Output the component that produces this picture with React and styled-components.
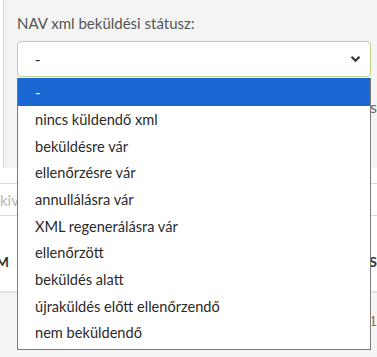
import React from 'react'
import styled, { createGlobalStyle } from 'styled-components'

const GlobalStyle = createGlobalStyle`
    html, body {
        margin: 0;
        padding: 0;
        background: #ffffff;
    }
    body {
        font-family: Lato, "Open Sans", sans-serif;
    }
`

const Page = styled.div`
    position: relative;
    width: 377px;
    height: 357px;
    overflow: hidden;
    background: #ffffff;
`

const FilterPanel = styled.div`
    height: 168px;
    box-sizing: border-box;
    margin-left: 3px;
    border-left: 1px solid #d6d6d6;
    background: #f4f4f4;
    padding: 13px 6px 0 13px;
`

const Label = styled.div`
    font-size: 15px;
    color: #555;
    line-height: 20px;
    margin-bottom: 8px;
`

const Select = styled.div`
    height: 36px;
    box-sizing: border-box;
    border: 1px solid #bed28c;
    border-radius: 4px;
    background: #ffffff;
    display: flex;
    align-items: center;
    justify-content: space-between;
    padding: 0 9px 0 17px;
    font-size: 15px;
    color: #222;
`

const HiddenRow = styled.div`
    display: flex;
    justify-content: flex-end;
    margin: 20px -6px 0 0;
    font-size: 16px;
    color: #666;
    white-space: nowrap;
`

const WhiteSection = styled.div`
    padding-top: 15px;
`

const SearchInput = styled.div`
    height: 33px;
    box-sizing: border-box;
    border-top: 1px solid #cfdbe6;
    border-bottom: 1px solid #cfdbe6;
    display: flex;
    align-items: center;
    font-size: 15px;
    color: #b5b5b5;
`

const HeaderRow = styled.div`
    height: 77px;
    display: flex;
    align-items: center;
    justify-content: space-between;
    padding-top: 15px;
    box-sizing: border-box;
    font-size: 14px;
    font-weight: 700;
    color: #333;
    border-bottom: 2px solid #e2e2e2;
`

const DataRow = styled.div`
    height: 64px;
    background: #f5f5f5;
    display: flex;
    align-items: center;
    justify-content: flex-end;
    padding-bottom: 10px;
    box-sizing: border-box;
    font-size: 14px;
    color: #b4651e;
`

const Clip = styled.span`
    display: inline-block;
    width: ${p => p.w}px;
    overflow: hidden;
    white-space: nowrap;
    direction: ${p => (p.end ? 'rtl' : 'ltr')};
`

const OptionList = styled.ul`
    position: absolute;
    left: 17px;
    top: 78px;
    width: 354px;
    margin: 0;
    padding: 0 0 3px;
    list-style: none;
    box-sizing: border-box;
    border: 1px solid #7a7a7a;
    border-top: none;
    background: #ffffff;
`

const Option = styled.li`
    height: 26.7px;
    display: flex;
    align-items: center;
    padding-left: 17px;
    font-size: 14.6px;
    color: ${p => (p.selected ? '#ffffff' : '#2a2a2a')};
    background: ${p => (p.selected ? '#1a66d2' : 'transparent')};
    &:first-child {
        height: 28px;
    }
`

const Chevron = () => (
    <svg width="11" height="8" viewBox="0 0 11 8">
        <path d="M1.5 1.8 L5.5 5.8 L9.5 1.8" fill="none" stroke="#333" strokeWidth="2.2" />
    </svg>
)

const options = [
    '-',
    'nincs küldendő xml',
    'beküldésre vár',
    'ellenőrzésre vár',
    'annullálásra vár',
    'XML regenerálásra vár',
    'ellenőrzött',
    'beküldés alatt',
    'újraküldés előtt ellenőrzendő',
    'nem beküldendő'
]

export default function App() {
    return (
        <Page>
            <GlobalStyle />
            <FilterPanel>
                <Label>NAV xml beküldési státusz:</Label>
                <Select>
                    <span>-</span>
                    <Chevron />
                </Select>
                <HiddenRow>Kifizetés</HiddenRow>
            </FilterPanel>
            <WhiteSection>
                <SearchInput>
                    <Clip w={17}>kivonat</Clip>
                </SearchInput>
                <HeaderRow>
                    <Clip w={9} end="1">SZÁM</Clip>
                    <Clip w={6} end="1">ÁLLAPOTOS</Clip>
                </HeaderRow>
                <DataRow>
                    <Clip w={5} end="1">1</Clip>
                </DataRow>
            </WhiteSection>
            <OptionList>
                {options.map((o, i) => (
                    <Option key={o} selected={i === 0}>{o}</Option>
                ))}
            </OptionList>
        </Page>
    )
}
